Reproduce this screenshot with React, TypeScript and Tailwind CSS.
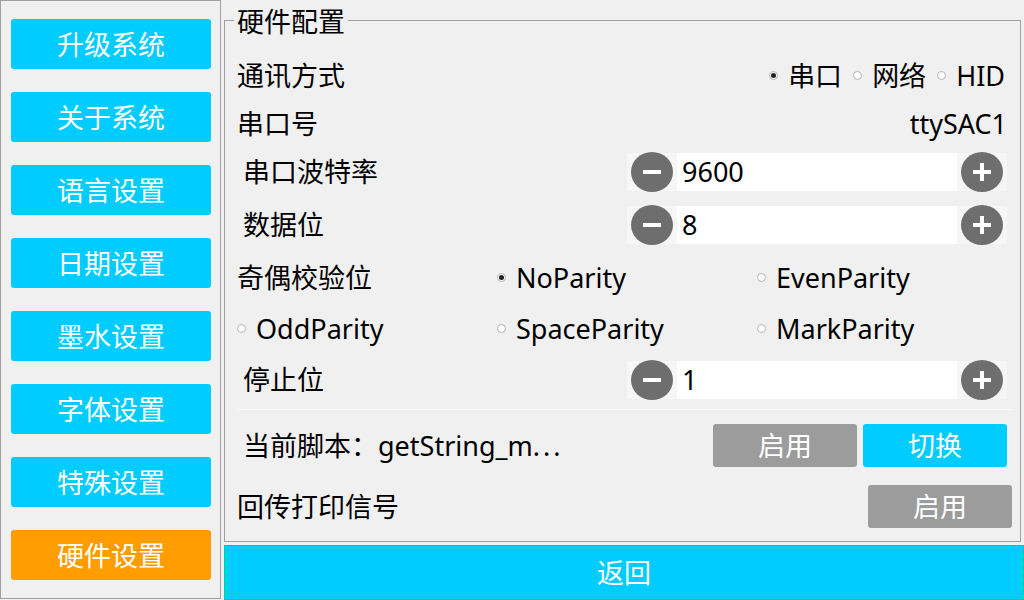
import React from 'react'

const menu = ['升级系统', '关于系统', '语言设置', '日期设置', '墨水设置', '字体设置', '特殊设置', '硬件设置']

function Radio({ checked, label }: { checked?: boolean; label: string }) {
  return (
    <div className="flex items-center">
      <span className="flex h-[9px] w-[9px] items-center justify-center rounded-full border border-[#b4b4b4] bg-white">
        {checked ? <span className="h-[5px] w-[5px] rounded-full bg-[#222]" /> : null}
      </span>
      <span className="ml-[10px]">{label}</span>
    </div>
  )
}

function RoundIcon({ plus }: { plus?: boolean }) {
  return (
    <svg width="42" height="40" viewBox="0 0 42 40" className="shrink-0">
      <ellipse cx="21" cy="20" rx="21" ry="20" fill="#6e6e6e" />
      <rect x="12" y="18" width="18" height="4" fill="#fff" />
      {plus ? <rect x="19" y="11" width="4" height="18" fill="#fff" /> : null}
    </svg>
  )
}

function Stepper({ value }: { value: string }) {
  return (
    <div className="ml-auto flex h-[38px] w-[380px] items-center bg-[#f6f6f6] pl-[4px] pr-[4px]">
      <RoundIcon />
      <div className="mx-[4px] flex h-[38px] flex-1 items-center bg-white pl-[5px]">{value}</div>
      <RoundIcon plus />
    </div>
  )
}

export default function App() {
  return (
    <div
      className="flex h-[600px] w-[1024px] bg-[#f0f0f0] text-[27px] leading-none text-black"
      style={{ fontFamily: '"Noto Sans", "Noto Sans CJK SC", sans-serif' }}
    >
      <aside className="flex h-[599px] w-[221px] flex-col gap-[23px] border border-[#a0a0a0] pl-[10px] pt-[18px]">
        {menu.map((item) => (
          <button
            key={item}
            type="button"
            className={
              item === '硬件设置'
                ? 'flex h-[50px] w-[200px] items-center justify-center rounded-[3px] bg-[#ff9c00] text-white'
                : 'flex h-[50px] w-[200px] items-center justify-center rounded-[3px] bg-[#00ccff] text-white'
            }
          >
            {item}
          </button>
        ))}
      </aside>

      <div className="ml-[3px] flex flex-1 flex-col">
        <div className="relative mt-[20px] h-[522px] w-[797px] border border-[#a0a0a0] pl-[12px] pr-[13px] pt-[30px]">
          <div className="absolute -top-[13px] left-[9px] bg-[#f0f0f0] px-[3px]">硬件配置</div>

          <div className="flex h-[48px] items-center">
            <span>通讯方式</span>
            <div className="ml-auto mr-[2px] flex items-center gap-[11px]">
              <Radio checked label="串口" />
              <Radio label="网络" />
              <Radio label="HID" />
            </div>
          </div>

          <div className="flex h-[48px] items-center">
            <span>串口号</span>
            <span className="ml-auto">ttySAC1</span>
          </div>

          <div className="flex h-[49px] items-center">
            <span className="pl-[6px]">串口波特率</span>
            <Stepper value="9600" />
          </div>

          <div className="flex h-[57px] items-center">
            <span className="pl-[6px]">数据位</span>
            <Stepper value="8" />
          </div>

          <div className="grid h-[48px] grid-cols-[260px_260px_1fr] items-center">
            <span>奇偶校验位</span>
            <Radio checked label="NoParity" />
            <Radio label="EvenParity" />
          </div>

          <div className="grid h-[54px] grid-cols-[260px_260px_1fr] items-center">
            <Radio label="OddParity" />
            <Radio label="SpaceParity" />
            <Radio label="MarkParity" />
          </div>

          <div className="flex h-[49px] items-center">
            <span className="pl-[6px]">停止位</span>
            <Stepper value="1" />
          </div>

          <div className="-mr-[5px] mt-[5px] h-px bg-[#fafafa]" />

          <div className="mt-[14px] flex h-[43px] items-center">
            <span className="pl-[6px]">
              当前脚本：getString_m<span className="tracking-[3px]">...</span>
            </span>
            <button type="button" className="ml-auto h-[43px] w-[144px] rounded-[3px] bg-[#9c9c9c] text-white">
              启用
            </button>
            <button type="button" className="ml-[6px] h-[43px] w-[144px] rounded-[3px] bg-[#00ccff] text-white">
              切换
            </button>
          </div>

          <div className="-mr-[5px] mt-[18px] flex h-[43px] items-center">
            <span>回传打印信号</span>
            <button type="button" className="ml-auto h-[43px] w-[144px] rounded-[3px] bg-[#9c9c9c] text-white">
              启用
            </button>
          </div>
        </div>

        <button
          type="button"
          className="mt-[3px] flex h-[55px] w-[800px] items-center justify-center border border-dotted border-[#e0603a] bg-[#00ccff] text-white"
        >
          返回
        </button>
      </div>
    </div>
  )
}
